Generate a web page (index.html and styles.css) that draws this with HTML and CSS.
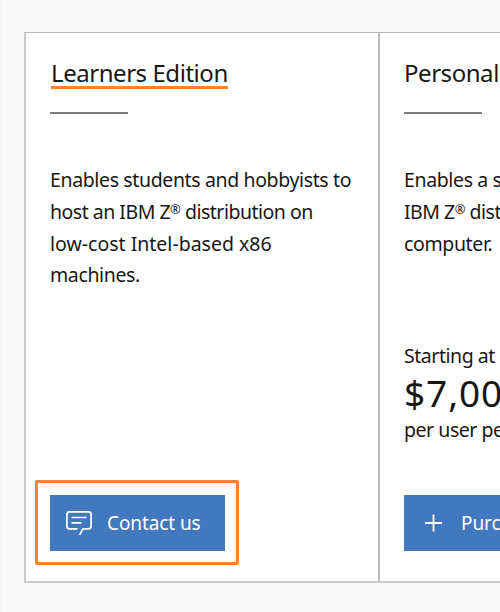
FILE: index.html
```html
<!DOCTYPE html>
<html lang="en">
<head>
<meta charset="utf-8">
<title>Editions</title>
<link rel="stylesheet" href="styles.css">
</head>
<body>
<main class="plans">
  <section class="card">
    <h2 class="title"><span class="marked">Learners Edition</span></h2>
    <div class="rule"></div>
    <p class="description">Enables students and hobbyists to<br><span class="tight">host an IBM Z<span class="reg">®</span> distribution on</span><br><span class="wide">low-cost Intel-based x86</span><br>machines.</p>
    <div class="highlight">
      <a class="button"><svg class="icon" width="28" height="26" viewBox="0 0 28 26" fill="none" stroke="currentColor" stroke-width="1.7"><path d="M12.5 18.8H4.5Q1.9 18.8 1.9 16.2V4.5Q1.9 1.9 4.5 1.9H23.5Q26.1 1.9 26.1 4.5V16.2Q26.1 18.8 23.5 18.8H18L14.6 24.8M6.5 7.5H21.5M6.5 12.9H16.5"/></svg><span class="label">Contact us</span></a>
    </div>
  </section>
  <section class="card">
    <h2 class="title">Personal</h2>
    <div class="rule"></div>
    <p class="description">Enables a s<br><span class="tight">IBM Z<span class="reg">®</span> dist</span><br>computer.</p>
    <div class="pricing">
      <p class="from">Starting at</p>
      <p class="price">$7,00</p>
      <p class="per">per user pe</p>
    </div>
    <a class="button buy"><svg class="icon" width="28" height="26" viewBox="0 0 28 26" fill="none" stroke="currentColor" stroke-width="1.8"><path d="M6 13H23M14.5 4.5V21.5"/></svg><span class="label">Purc</span></a>
  </section>
</main>
</body>
</html>
```
FILE: styles.css
```css
* { box-sizing: border-box; }
body {
  margin: 0;
  height: 612px;
  overflow: hidden;
  background: #f9f9f9;
  border-left: 1px solid #f3f3f5;
  font-family: "Noto Sans", sans-serif;
  color: #171717;
}
h2, p { margin: 0; font-weight: 400; white-space: nowrap; }
.plans {
  display: grid;
  grid-template-columns: 354px 1fr;
  height: 551px;
  margin: 32px 0 0 23px;
  background: #fff;
  border-top: 1px solid #b8b8b8;
  border-left: 2px solid #cacaca;
  border-bottom: 2px solid #cacaca;
}
.card {
  display: flex;
  flex-direction: column;
  min-width: 0;
  height: 548px;
  padding: 23px 0 0 24px;
  overflow: hidden;
}
.card:first-child { border-right: 2px solid #bdbdbd; }
.title { height: 56px; font-size: 24px; line-height: 34px; letter-spacing: -0.45px; }
.marked {
  display: block;
  width: 177px;
  height: 33px;
  margin-left: 1px;
  border-bottom: 3px solid #ff832b;
}
.rule { width: 78px; height: 2px; background: #7c7c7c; }
.description { margin-top: 50px; font-size: 19.5px; line-height: 31.8px; letter-spacing: -0.37px; }
.tight { letter-spacing: -0.5px; }
.wide { letter-spacing: 0; }
.reg { font-size: 13px; line-height: 0; vertical-align: 5px; }
.highlight {
  margin: auto 0 16px -15px;
  width: 204px;
  height: 85px;
  padding: 12px;
  border: 3px solid #ff832b;
  border-radius: 2px;
}
.button {
  display: flex;
  align-items: center;
  width: 175px;
  height: 56px;
  padding-left: 15px;
  background: #4178be;
  color: #fff;
  font-size: 19px;
  letter-spacing: -0.1px;
}
.icon { flex: none; margin-right: 14px; }
.buy { width: auto; margin: auto 0 30px; }
.pricing { margin-top: 83px; }
.from, .per { font-size: 19.5px; line-height: 28px; letter-spacing: -0.45px; }
.price { font-size: 37px; line-height: 46px; letter-spacing: 0.9px; }
```
